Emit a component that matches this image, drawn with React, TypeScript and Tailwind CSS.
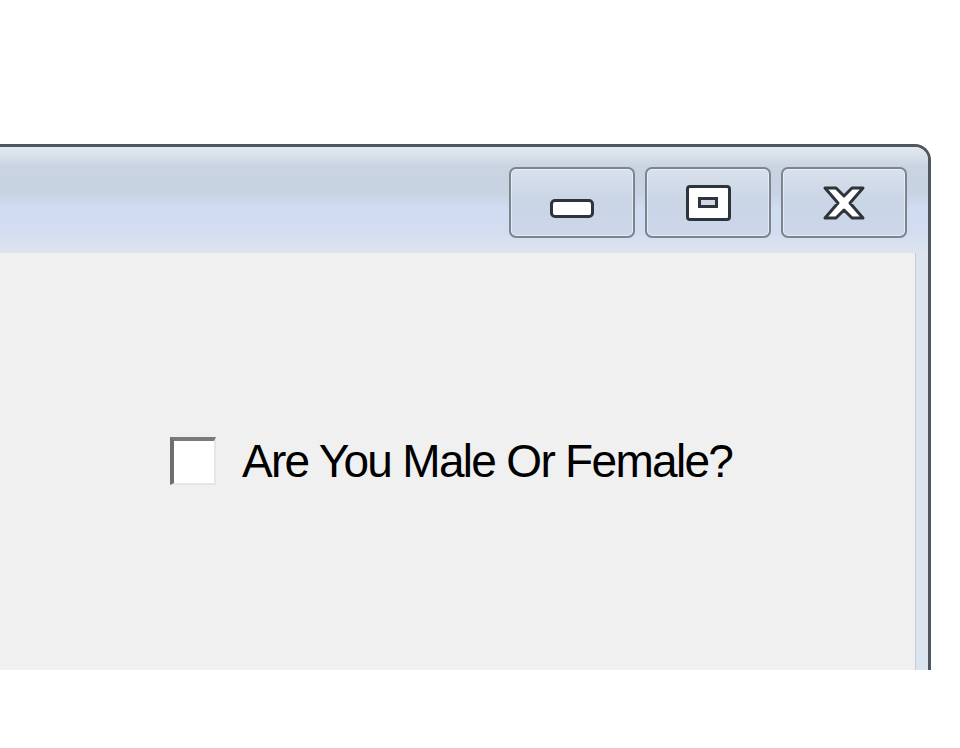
export default function App() {
  return (
    <div className="h-[748px] w-[960px] overflow-hidden bg-white pt-[144px]">
      <div className="flex h-[526px] w-[931px] flex-col rounded-tr-[16px] border-t-[3px] border-r-[3px] border-[#4f565f] bg-[#dce4ee]">
        {/* title bar */}
        <div className="flex h-[106px] items-start justify-end rounded-tr-[13px] bg-[linear-gradient(to_bottom,#e3e9f1_0px,#c9d4e1_20px,#c7d3e2_45px,#cfdcf1_60px,#d2ddf0_85px,#dde4ee_106px)] pr-[21px] pt-[20px]">
          <div className="flex gap-[10px]">
            <TitleButton>
              <div className="mt-[12px] h-[19px] w-[44px] rounded-[5px] border-[3px] border-[#2e343b] bg-white" />
            </TitleButton>
            <TitleButton>
              <div className="flex h-[36px] w-[45px] items-center justify-center rounded-[4px] border-[3px] border-[#2e343b] bg-white">
                <div className="h-[11px] w-[20px] border-[3px] border-[#2e343b] bg-[#cfd8e4]" />
              </div>
            </TitleButton>
            <TitleButton>
              <svg width="46" height="36" viewBox="0 0 46 36">
                <path
                  d="M4 3 H15 L23 11 L31 3 H42 L29 18 L42 33 H31 L23 25 L15 33 H4 L17 18 Z"
                  fill="white"
                  stroke="#2e343b"
                  strokeWidth="3"
                  strokeLinejoin="round"
                />
              </svg>
            </TitleButton>
          </div>
        </div>
        {/* client area */}
        <div className="mr-[12px] flex-1 border-r border-[#c4ccd8] bg-[#f0f0f0] pl-[170px] pt-[184px]">
          <label className="flex items-center gap-[26px]">
            <span className="h-[48px] w-[46px] border-t-[4px] border-l-[4px] border-t-[#7a7a7a] border-l-[#6e6e6e] border-r-2 border-b-2 border-r-[#e6e6e6] border-b-[#e6e6e6] bg-white" />
            <span className="font-['Liberation_Sans',Arial,sans-serif] text-[46px] leading-none tracking-[-1.7px] text-black">
              Are You Male Or Female?
            </span>
          </label>
        </div>
      </div>
    </div>
  );
}

function TitleButton({ children }: { children: React.ReactNode }) {
  return (
    <div className="flex h-[71px] w-[126px] items-center justify-center rounded-[7px] border-2 border-[#7b8591] bg-[linear-gradient(to_bottom,#d9e1ec,#c9d5e5_50%,#ccd8ea)] shadow-[inset_0_0_0_1px_rgba(255,255,255,0.5)]">
      {children}
    </div>
  );
}
